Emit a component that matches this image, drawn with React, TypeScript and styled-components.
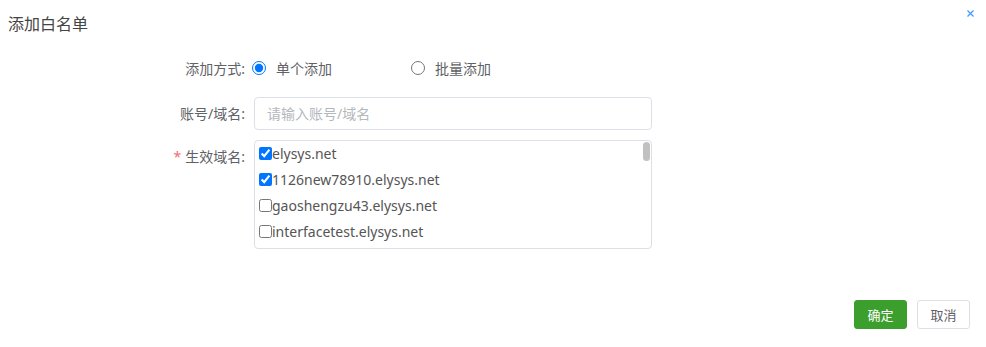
import React from 'react'
import styled, { createGlobalStyle } from 'styled-components'

const GlobalStyle = createGlobalStyle`
  html, body {
    margin: 0;
    padding: 0;
    background: #fff;
    font-family: "Noto Sans", "Noto Sans CJK SC", sans-serif;
  }
`

const Dialog = styled.div`
  width: 986px;
  height: 347px;
  background: #fff;
  display: flex;
  flex-direction: column;
`

const Header = styled.div`
  display: flex;
  justify-content: space-between;
  align-items: flex-start;
  height: 53px;
  padding: 13px 11px 0 8px;
  box-sizing: border-box;
`

const Title = styled.div`
  font-size: 16px;
  line-height: 22px;
  color: #444;
`

const CloseButton = styled.button`
  border: none;
  background: none;
  padding: 0;
  margin: -5px 0 0 0;
  width: 10px;
  height: 10px;
  display: flex;
  align-items: center;
  justify-content: center;
  cursor: pointer;
`

const Form = styled.div`
  display: flex;
  flex-direction: column;
  gap: 12px;
  padding-left: 165px;
  flex: 1;
`

const Row = styled.div<{ $top?: boolean }>`
  display: flex;
  align-items: ${({ $top }) => ($top ? 'flex-start' : 'center')};
  gap: 9px;
  min-height: 32px;
`

const Label = styled.label<{ $top?: boolean }>`
  width: 80px;
  text-align: right;
  font-size: 14px;
  color: #606266;
  line-height: 32px;
  margin-top: ${({ $top }) => ($top ? '-1px' : '0')};
  white-space: nowrap;
`

const Required = styled.span`
  color: #f56c6c;
  margin-right: 4px;
`

const RadioGroup = styled.div`
  display: flex;
  align-items: center;
  margin-top: -2px;
`

const RadioOption = styled.label`
  display: flex;
  align-items: center;
  min-width: 159px;
  font-size: 14px;
  color: #606266;
  cursor: pointer;

  input {
    width: 14px;
    height: 14px;
    margin: 0 10px 0 -2px;
  }
`

const TextInput = styled.input`
  width: 398px;
  height: 33px;
  box-sizing: border-box;
  border: 1px solid #dcdfe6;
  border-radius: 4px;
  padding: 0 12px;
  font-size: 14px;
  font-family: inherit;
  color: #606266;
  outline: none;

  &::placeholder {
    color: #b4b7bd;
  }
`

const DomainBox = styled.div`
  position: relative;
  width: 398px;
  height: 109px;
  box-sizing: border-box;
  border: 1px solid #dcdfe6;
  border-radius: 4px;
  overflow: hidden;
  margin-top: -2px;
  padding-top: 0;
`

const ScrollThumb = styled.div`
  position: absolute;
  top: 1px;
  right: 1px;
  width: 7px;
  height: 19px;
  border-radius: 4px;
  background: #c1c1c1;
`

const DomainItem = styled.label`
  display: flex;
  align-items: center;
  height: 26px;
  font-size: 14px;
  color: #555;
  cursor: pointer;
  margin-top: -1px;
  margin-bottom: 1px;

  input {
    margin: 0 0 0 4px;
    width: 13px;
    height: 13px;
  }
`

const Footer = styled.div`
  display: flex;
  justify-content: flex-end;
  gap: 10px;
  padding: 0 16px 18px 0;
`

const Button = styled.button<{ $primary?: boolean }>`
  width: 53px;
  height: 29px;
  border-radius: 3px;
  font-size: 13px;
  font-family: inherit;
  cursor: pointer;
  border: 1px solid ${({ $primary }) => ($primary ? '#3c9e2c' : '#dcdfe6')};
  background: ${({ $primary }) => ($primary ? '#3c9e2c' : '#fff')};
  color: ${({ $primary }) => ($primary ? '#fff' : '#606266')};
`

const domains = [
  { name: 'elysys.net', checked: true },
  { name: '1126new78910.elysys.net', checked: true },
  { name: 'gaoshengzu43.elysys.net', checked: false },
  { name: 'interfacetest.elysys.net', checked: false },
]

export default function App() {
  const [mode, setMode] = React.useState('single')

  return (
    <Dialog>
      <GlobalStyle />
      <Header>
        <Title>添加白名单</Title>
        <CloseButton aria-label="close">
          <svg width="7" height="7" viewBox="0 0 7 7">
            <path d="M0.5 0.5 L6.5 6.5 M6.5 0.5 L0.5 6.5" stroke="#409eff" strokeWidth="1.3" />
          </svg>
        </CloseButton>
      </Header>

      <Form>
        <Row>
          <Label>添加方式:</Label>
          <RadioGroup>
            <RadioOption>
              <input type="radio" name="mode" checked={mode === 'single'} onChange={() => setMode('single')} />
              单个添加
            </RadioOption>
            <RadioOption>
              <input type="radio" name="mode" checked={mode === 'batch'} onChange={() => setMode('batch')} />
              批量添加
            </RadioOption>
          </RadioGroup>
        </Row>

        <Row>
          <Label>账号/域名:</Label>
          <TextInput placeholder="请输入账号/域名" />
        </Row>

        <Row $top>
          <Label $top>
            <Required>*</Required>生效域名:
          </Label>
          <DomainBox>
            <ScrollThumb />
            {domains.map((d) => (
              <DomainItem key={d.name}>
                <input type="checkbox" defaultChecked={d.checked} />
                {d.name}
              </DomainItem>
            ))}
          </DomainBox>
        </Row>
      </Form>

      <Footer>
        <Button $primary>确定</Button>
        <Button>取消</Button>
      </Footer>
    </Dialog>
  )
}
